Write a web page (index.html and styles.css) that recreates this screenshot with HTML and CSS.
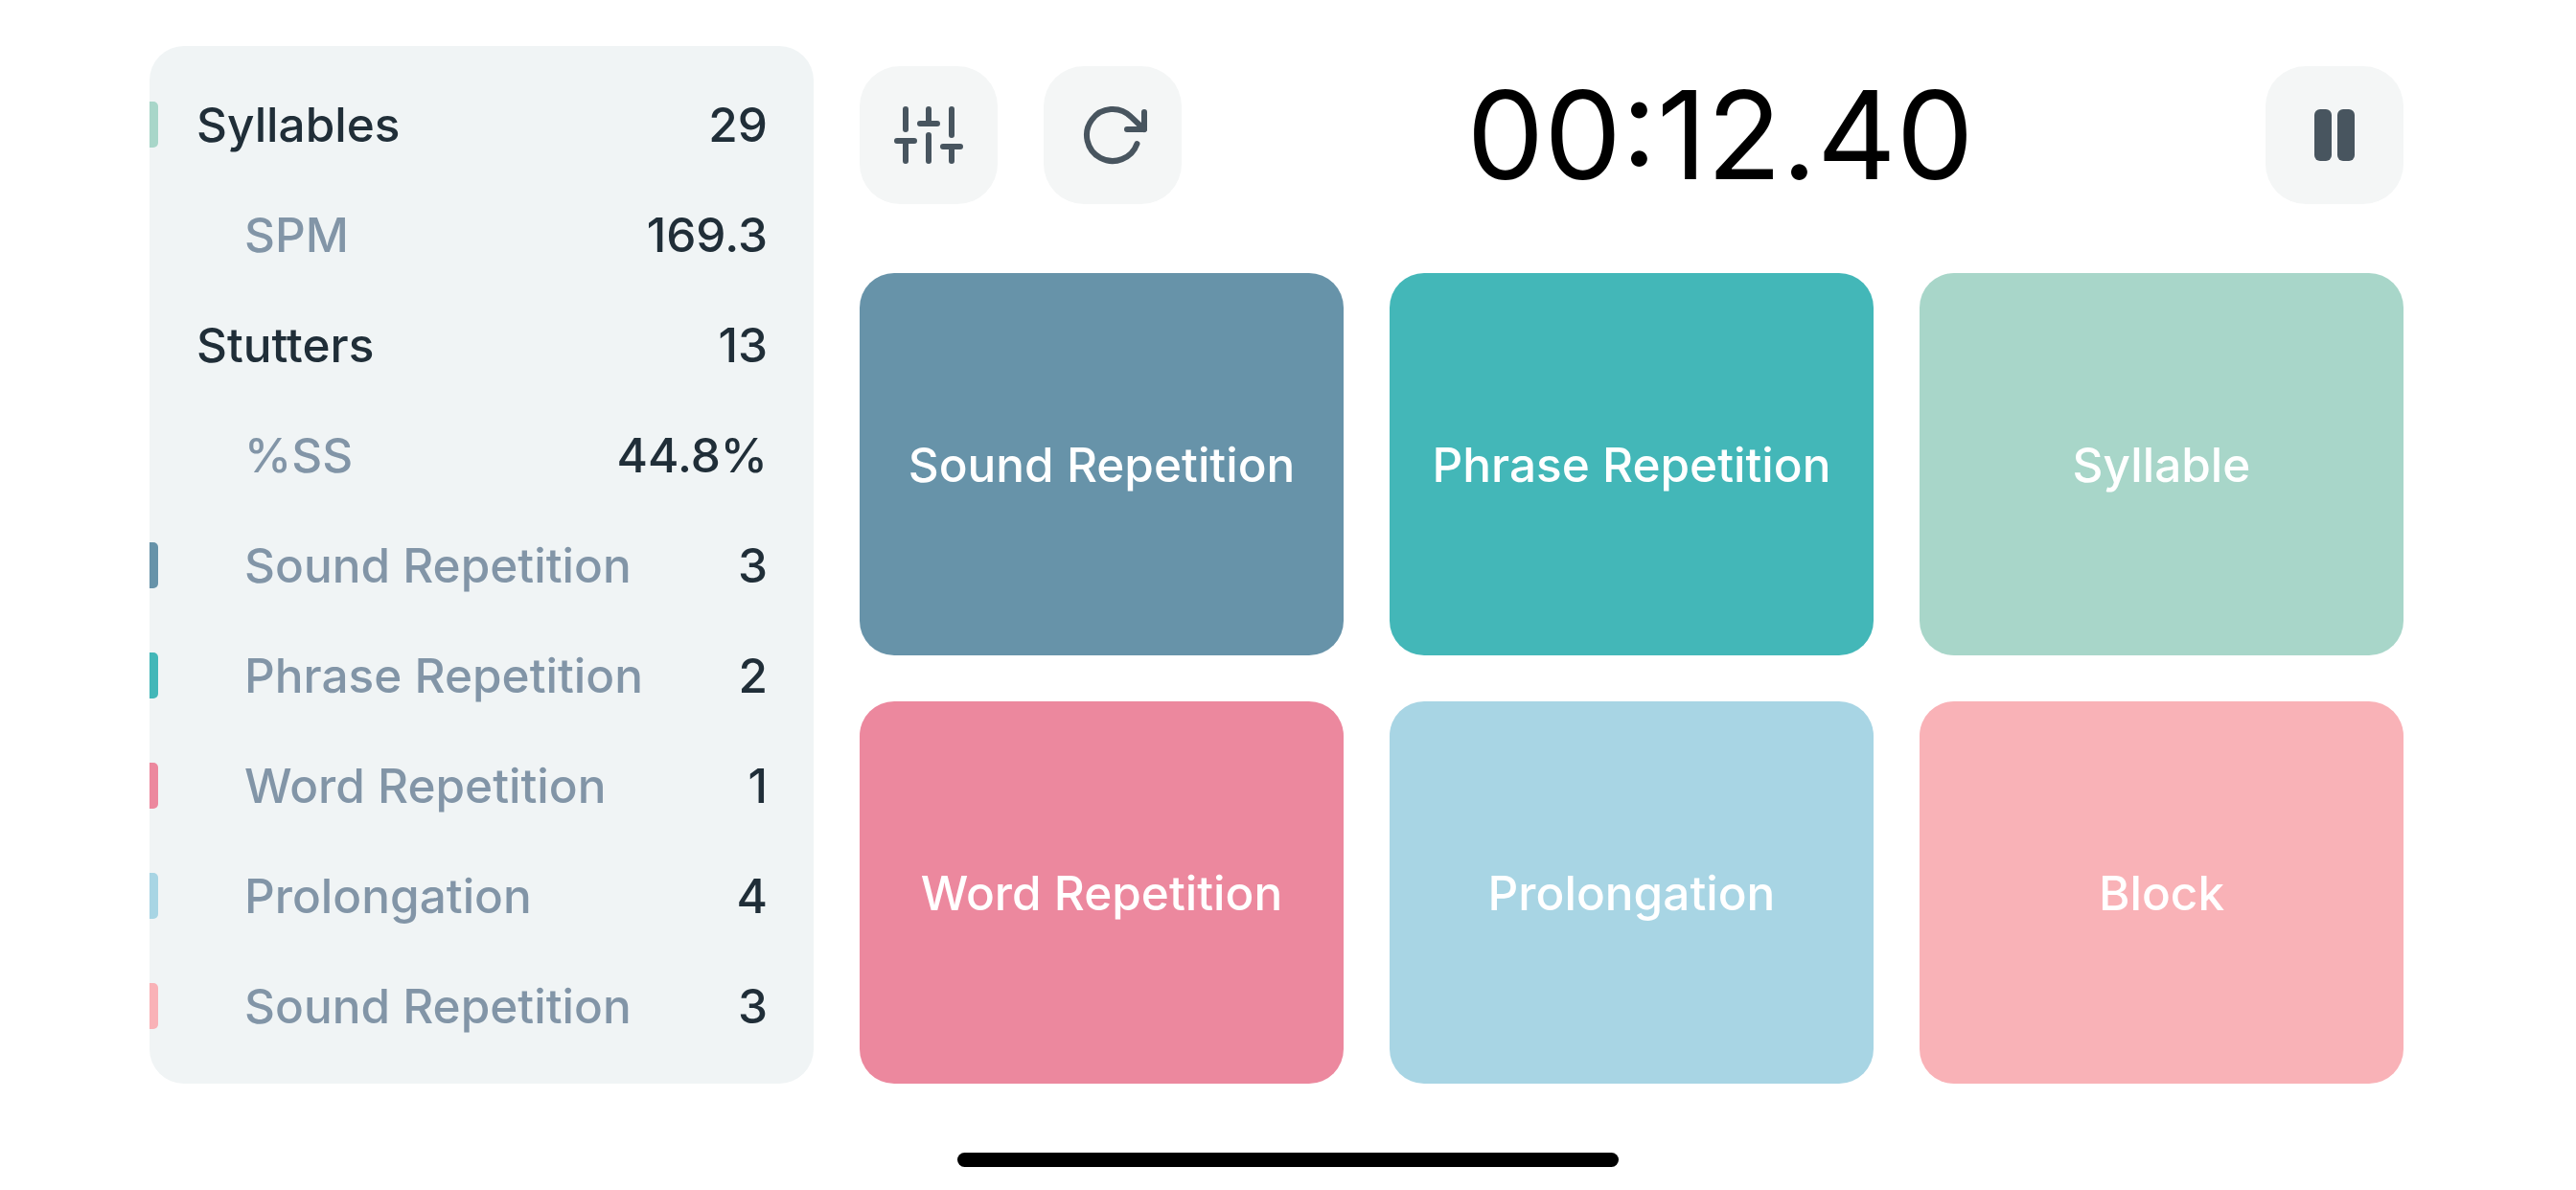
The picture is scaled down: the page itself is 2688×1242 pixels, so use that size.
FILE: index.html
```html
<!DOCTYPE html>
<html lang="en">
<head>
    <meta charset="UTF-8">
    <meta name="viewport" content="width=device-width, initial-scale=1.0">
    <title>Stutter Counter</title>
    <link rel="stylesheet" href="styles.css">
</head>
<body>
    <div class="screen">
        <div class="stats">
            <div class="row"><span class="mark syllable"></span><span class="name">Syllables</span><span class="value">29</span></div>
            <div class="row sub"><span class="name">SPM</span><span class="value">169.3</span></div>
            <div class="row"><span class="name">Stutters</span><span class="value">13</span></div>
            <div class="row sub"><span class="name">%SS</span><span class="value">44.8%</span></div>
            <div class="row sub"><span class="mark sound"></span><span class="name">Sound Repetition</span><span class="value">3</span></div>
            <div class="row sub"><span class="mark phrase"></span><span class="name">Phrase Repetition</span><span class="value">2</span></div>
            <div class="row sub"><span class="mark word"></span><span class="name">Word Repetition</span><span class="value">1</span></div>
            <div class="row sub"><span class="mark prolong"></span><span class="name">Prolongation</span><span class="value">4</span></div>
            <div class="row sub"><span class="mark block"></span><span class="name">Sound Repetition</span><span class="value">3</span></div>
        </div>
        <div class="main">
            <div class="toolbar">
                <button class="icon-btn" aria-label="Settings">
                    <svg viewBox="0 0 24 24" class="icon">
                        <path d="M4 21v-7M4 10V3M12 21v-9M12 8V3M20 21v-5M20 12V3M1 14h6M9 8h6M17 16h6"/>
                    </svg>
                </button>
                <button class="icon-btn" aria-label="Restart">
                    <svg viewBox="0 0 24 24" class="icon">
                        <path d="M23 4v6h-6"/>
                        <path d="M20.49 15a9 9 0 1 1-2.12-9.36L23 10"/>
                    </svg>
                </button>
                <div class="timer">00:12.40</div>
                <button class="icon-btn" aria-label="Pause">
                    <svg viewBox="0 0 24 24" class="icon-solid">
                        <rect x="5" y="3" width="6" height="18" rx="2"/>
                        <rect x="13" y="3" width="6" height="18" rx="2"/>
                    </svg>
                </button>
            </div>
            <div class="tiles">
                <button class="tile sound">Sound Repetition</button>
                <button class="tile phrase">Phrase Repetition</button>
                <button class="tile syllable">Syllable</button>
                <button class="tile word">Word Repetition</button>
                <button class="tile prolong">Prolongation</button>
                <button class="tile block">Block</button>
            </div>
        </div>
    </div>
    <div class="home-bar"></div>
</body>
</html>
```

FILE: styles.css
```css
* {
    box-sizing: border-box;
}
body {
    margin: 0;
    width: 2688px;
    height: 1242px;
    overflow: hidden;
    background-color: #fff;
    font-family: Inter, "Noto Sans", sans-serif;
}
.screen {
    display: flex;
    gap: 48px;
    padding: 48px 180px 0 156px;
}
.stats {
    width: 693px;
    height: 1083px;
    padding: 24px 48px 24px 0;
    border-radius: 36px;
    background-color: #f0f4f5;
}
.row {
    position: relative;
    display: flex;
    align-items: center;
    justify-content: space-between;
    height: 115px;
    padding-left: 49px;
    font-size: 49.5px;
    font-weight: 450;
    color: #202e38;
}
.row.sub {
    padding-left: 99px;
}
.row.sub .name {
    color: #8295a7;
}
.mark {
    position: absolute;
    left: 0;
    top: 34px;
    width: 9px;
    height: 48px;
    border-radius: 0 5px 5px 0;
}
.sound { background-color: #6793a9; }
.phrase { background-color: #43b7b8; }
.syllable { background-color: #a8d6c9; }
.word { background-color: #ec889e; }
.prolong { background-color: #a8d5e4; }
.block { background-color: #f9b2b7; }
.main {
    flex: 1;
}
.toolbar {
    display: flex;
    align-items: center;
    gap: 48px;
    margin-top: 21px;
}
.icon-btn {
    display: flex;
    align-items: center;
    justify-content: center;
    flex: none;
    width: 144px;
    height: 144px;
    padding: 0;
    border: none;
    border-radius: 42px;
    background-color: #f4f6f6;
}
.icon {
    width: 72px;
    height: 72px;
    fill: none;
    stroke: #48555f;
    stroke-width: 2;
    stroke-linecap: round;
    stroke-linejoin: round;
}
.icon-solid {
    width: 72px;
    height: 72px;
    fill: #48555f;
}
.timer {
    flex: 1;
    padding-right: 7px;
    text-align: center;
    font-size: 128px;
    line-height: 144px;
    color: #000;
}
.tiles {
    display: grid;
    grid-template-columns: repeat(3, 1fr);
    grid-template-rows: 399px 399px;
    gap: 48px;
    margin-top: 72px;
}
.tile {
    padding: 0;
    border: none;
    border-radius: 36px;
    color: #fff;
    font-family: inherit;
    font-size: 49.5px;
    font-weight: 450;
}
.home-bar {
    width: 690px;
    height: 15px;
    margin: 72px auto 0;
    border-radius: 8px;
    background-color: #000;
}
```
